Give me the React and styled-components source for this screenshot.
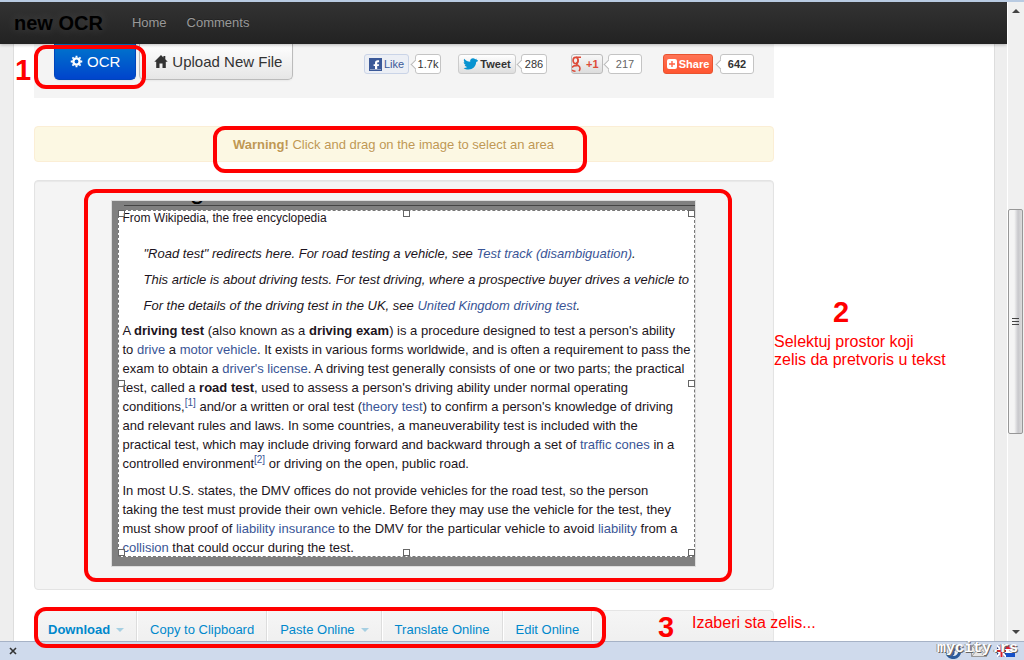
import React from "react"
import styled, { createGlobalStyle, css } from "styled-components"

const GlobalStyle = createGlobalStyle`
  * {
    box-sizing: border-box;
  }
  body {
    margin: 0;
    font-family: "Liberation Sans", Arial, sans-serif;
    font-size: 13px;
    line-height: 20px;
    color: #333;
    background: #eee;
  }
  a {
    text-decoration: none;
  }
  button {
    font-family: inherit;
    cursor: pointer;
  }
`

const Screen = styled.div`
  position: relative;
  display: flex;
  flex-direction: column;
  height: 100vh;
  overflow: hidden;
  border-top: 2px solid #b9cbe2;
`

const Browser = styled.div`
  display: flex;
  flex: 1;
  min-height: 0;
`

const Viewport = styled.div`
  display: flex;
  flex-direction: column;
  flex: 1;
  min-width: 0;
  overflow: hidden;
`

const Navbar = styled.nav`
  display: flex;
  align-items: center;
  flex: none;
  height: 42px;
  padding: 0 14px;
  gap: 20px;
  background: linear-gradient(#333, #222);
  box-shadow: 0 1px 3px rgba(0, 0, 0, 0.25);
  z-index: 1;
  a {
    color: #999;
    text-shadow: 0 -1px 0 rgba(0, 0, 0, 0.25);
  }
  .brand {
    margin-right: 9px;
    font-size: 20px;
    font-weight: bold;
    color: #000;
    text-shadow: 0 0 12px rgba(255, 255, 255, 0.15);
  }
`

const Paper = styled.main`
  flex: 1;
  min-height: 0;
  margin: 0 12px 0 13px;
  padding: 0 20px;
  overflow: hidden;
  background: #fff;
  border: solid #ddd;
  border-width: 0 1px;
`

const Column = styled.div`
  display: flex;
  flex-direction: column;
  max-width: 740px;
`

const Toolbar = styled.div`
  display: flex;
  align-items: flex-start;
  height: 54px;
  padding: 0 20px;
  background: #f4f4f4;
`

const LargeButton = styled.button`
  display: flex;
  align-items: center;
  gap: 4px;
  height: 36px;
  padding: 0 10px 0 14px;
  font-size: 15px;
  color: #333;
  background: linear-gradient(#fff, #e6e6e6);
  border: 1px solid #bbb;
  border-top: 0;
  border-radius: 0 0 5px 5px;
  box-shadow: 0 1px 2px rgba(0, 0, 0, 0.05);
  ${({ $primary }) =>
    $primary &&
    css`
      margin-right: 3px;
      padding: 0 15px;
      color: #fff;
      background: linear-gradient(#0077cc, #0044cc);
      border-color: #0044bb;
    `}
`

const Social = styled.div`
  display: flex;
  align-items: center;
  margin: 10px 0 0 auto;
`

const SocialItem = styled.div`
  display: flex;
  align-items: center;
  margin-left: ${({ $space }) => $space}px;
`

const socialLooks = {
  like: css`
    width: 45px;
    color: #3b5998;
    background: #eceff5;
    border-color: #cad4e7;
  `,
  tweet: css`
    width: 58px;
    font-weight: bold;
    color: #333;
    background: linear-gradient(#fff, #dedede);
    border-color: #ccc;
  `,
  plus: css`
    width: 32px;
    justify-content: flex-start;
    gap: 4px;
    font-weight: bold;
    color: #dd4b39;
    background: linear-gradient(#f8f8f8, #ddd);
    border-color: #bbb;
  `,
  share: css`
    width: 50px;
    font-weight: bold;
    color: #fff;
    background: linear-gradient(#ff7355, #ff5530);
    border-color: #e8532f;
  `,
}

const SocialButton = styled.button`
  display: flex;
  align-items: center;
  justify-content: center;
  gap: 2px;
  height: 20px;
  padding: 0;
  font-size: 11px;
  border: 1px solid;
  border-radius: 3px;
  ${({ $look }) => socialLooks[$look]}
`

const Count = styled.span`
  position: relative;
  width: ${({ $width }) => $width}px;
  height: 20px;
  margin-left: ${({ $gap }) => $gap}px;
  font-size: 11px;
  font-weight: ${({ $bold }) => ($bold ? "bold" : "normal")};
  line-height: 18px;
  text-align: center;
  color: ${({ $color }) => $color || "#333"};
  background: #fff;
  border: 1px solid #c4c4c4;
  border-radius: 3px;
  &::before {
    content: "";
    position: absolute;
    top: 6px;
    left: -4px;
    width: 6px;
    height: 6px;
    background: #fff;
    border: solid #bbb;
    border-width: 0 0 1px 1px;
    transform: rotate(45deg);
  }
`

const Alert = styled.p`
  margin: 28px 0 18px;
  padding: 9px 35px 7px 14px;
  text-align: center;
  line-height: 18px;
  color: #c09853;
  background: #fcf8e3;
  border: 1px solid #fbeed5;
  border-radius: 4px;
  text-shadow: 0 1px 0 rgba(255, 255, 255, 0.5);
`

const Well = styled.section`
  display: flex;
  justify-content: center;
  padding: 19px 21px 22px 19px;
  background: #f4f4f4;
  border: 1px solid #e3e3e3;
  border-radius: 4px;
  box-shadow: inset 0 1px 1px rgba(0, 0, 0, 0.05);
`

const Scan = styled.div`
  width: 585px;
  padding: 0 0 9px 6px;
  background: #808080;
  border: 1px solid #ddd;
`

const ScanTitle = styled.div`
  display: flex;
  align-items: flex-end;
  height: 5px;
  margin: 0 0 4px 6px;
  overflow: hidden;
  border-bottom: 1px solid #444;
  h1 {
    margin: 0;
    font-size: 26px;
    font-weight: normal;
    line-height: 30px;
    color: #000;
  }
`

const Selection = styled.article`
  position: relative;
  width: 577px;
  height: 347px;
  padding: 0 0 0 4px;
  font-size: 13px;
  line-height: 19px;
  white-space: nowrap;
  color: #1c1420;
  background: #fff;
  border: 1px dashed #777;
  p,
  blockquote {
    margin: 0;
  }
  .tagline {
    font-size: 12px;
    line-height: 15px;
  }
  blockquote {
    display: flex;
    flex-direction: column;
    gap: 7px;
    margin: 18px 0 6px 21px;
    font-style: italic;
  }
  p + p {
    margin-top: 8px;
  }
  a {
    color: #3a5596;
  }
  sup {
    font-size: 10px;
    line-height: 1px;
  }
`

const Handle = styled.i`
  position: absolute;
  top: ${({ $y }) => $y};
  left: ${({ $x }) => $x};
  width: 7px;
  height: 7px;
  border: 1px solid #666;
  background: rgba(255, 255, 255, 0.6);
`

const Menu = styled.div`
  display: flex;
  height: 40px;
  margin-top: 20px;
  background: linear-gradient(#f5f5f5, #eee);
  border: 1px solid #e5e5e5;
  border-radius: 4px 4px 0 0;
`

const MenuLink = styled.a`
  display: flex;
  align-items: center;
  gap: 6px;
  padding: 0 12px 0 13px;
  color: #0088cc;
  font-weight: ${({ $bold }) => ($bold ? "bold" : "normal")};
  border-right: 1px solid #ddd;
  box-shadow: 1px 0 0 #fff;
`

const Caret = styled.span`
  border: 4px solid transparent;
  border-top-color: #a6cfe2;
  border-bottom: 0;
`

const Scrollbar = styled.div`
  display: flex;
  flex-direction: column;
  align-items: center;
  justify-content: space-between;
  width: 17px;
  padding: 7px 1px 7px 0;
  background: #f0f0f0;
  border-left: 1px solid #fff;
`

const Arrow = styled.span`
  border: 4px solid transparent;
  ${({ $up }) =>
    $up
      ? "border-top: 0; border-bottom-color: #444;"
      : "border-bottom: 0; border-top-color: #444;"}
`

const Thumb = styled.div`
  display: flex;
  flex-direction: column;
  align-items: center;
  justify-content: center;
  gap: 2px;
  width: 15px;
  height: 36%;
  background: linear-gradient(90deg, #f5f5f5 40%, #c8c8cc 70%, #dcdcdc);
  border: 1px solid #979797;
  border-radius: 2px;
  span {
    width: 7px;
    height: 1px;
    background: #444;
  }
`

const StatusBar = styled.footer`
  display: flex;
  align-items: center;
  flex: none;
  height: 19px;
  padding: 0 9px 0 8px;
  background: #cfdaec;
  border-top: 1px solid #a6b2c6;
  button {
    display: flex;
    padding: 1px;
    background: none;
    border: 0;
  }
`

const Tray = styled.div`
  display: flex;
  align-items: center;
  gap: 10px;
  margin-left: auto;
`

const Watermark = styled.span`
  position: absolute;
  right: 6px;
  bottom: 2px;
  font-family: "Liberation Mono", monospace;
  font-size: 15px;
  font-weight: bold;
  line-height: 18px;
  color: #fff;
  text-shadow: 1px 1px 0 #666, -1px 0 0 #999;
`

const Outline = styled.div`
  position: absolute;
  top: ${({ $top }) => $top}px;
  left: ${({ $left }) => $left}px;
  width: ${({ $width }) => $width}px;
  height: ${({ $height }) => $height}px;
  border: 4px solid #f00;
  border-radius: 12px;
  pointer-events: none;
  z-index: 2;
`

const Note = styled.div`
  position: absolute;
  top: ${({ $top }) => $top}px;
  left: ${({ $left }) => $left}px;
  font-size: ${({ $step }) => ($step ? 29 : 16)}px;
  font-weight: ${({ $step }) => ($step ? "bold" : "normal")};
  line-height: ${({ $step }) => ($step ? 30 : 18)}px;
  white-space: pre;
  color: #f00;
  z-index: 2;
`

const GearIcon = () => (
  <svg width="13" height="13" viewBox="0 0 14 14">
    <circle cx="7" cy="7" r="3.4" fill="none" stroke="#fff" strokeWidth="2.6" />
    <path
      d="M7 0.8v2M7 11.2v2M0.8 7h2M11.2 7h2M2.6 2.6l1.4 1.4M10 10l1.4 1.4M2.6 11.4L4 10M10 4l1.4-1.4"
      stroke="#fff"
      strokeWidth="2"
    />
  </svg>
)

const HomeIcon = () => (
  <svg width="14" height="13" viewBox="0 0 14 13">
    <path
      d="M7 0L0.3 6.7h1.9V13h3.3V8.6h3V13h3.3V6.7h1.9L11.3 4.2V1H9.4v1.4z"
      fill="#333"
    />
  </svg>
)

const FacebookIcon = () => (
  <svg width="13" height="13" viewBox="0 0 13 13">
    <path d="M0 0h13v13H0z" fill="#3b5998" />
    <path
      d="M6 12V8H4.6V6.2H6V5c0-1.8 1-2.7 2.6-2.7h1.5v1.9H9c-.6 0-.8.3-.8.8v1.2h1.9L9.8 8H8.2v4z"
      fill="#fff"
    />
    <path d="M1 11h11v1H1z" fill="#8b9dc3" />
  </svg>
)

const TwitterIcon = () => (
  <svg width="15" height="12" viewBox="0 0 15 12">
    <path
      d="M14.8 3.2l-1.6.9C13 8.6 9.7 11.6 5.5 11.6 3.5 11.6 1.8 11 .6 10c1.5.1 2.7-.3 3.7-1C2.9 8.8 2 8 1.7 7h1.2C1.5 6.5.7 5.4.7 4.1l1.2.3C.8 3.4.5 2 1.2.7c1.6 1.8 3.5 2.9 6 3C6.8 1.7 8.2.3 10 .3c1 0 1.7.4 2.2 1L14 .7l-.7 1.4 1.4-.1z"
      fill="#0793d0"
    />
  </svg>
)

const GoogleIcon = () => (
  <svg width="10" height="16" viewBox="0 0 10 16">
    <ellipse
      cx="3.6"
      cy="4.5"
      rx="2.5"
      ry="3.2"
      fill="none"
      stroke="#dd4b39"
      strokeWidth="1.7"
    />
    <path
      d="M4 1.3h5M6 3.5c1 2-1.5 3.3-1.5 4.5 0 1.3 3.5 1.5 3.5 4.2 0 1.2-.4 2-1 2.8M0 11.5c1-1.7 3-2 5.5-1.8M0 14c1 .9 2 1.2 3.5 1.2"
      fill="none"
      stroke="#dd4b39"
      strokeWidth="1.6"
    />
  </svg>
)

const AddIcon = () => (
  <svg width="10" height="10" viewBox="0 0 10 10">
    <rect width="10" height="10" rx="2" fill="#fff" />
    <path d="M5 2v6M2 5h6" stroke="#ff6347" strokeWidth="1.4" />
  </svg>
)

const SwirlIcon = () => (
  <svg width="15" height="15" viewBox="0 0 15 15">
    <circle cx="7.5" cy="7.5" r="7" fill="#e8eef6" />
    <path
      d="M10.5 1.5A6.5 6.5 0 1 1 2 11c3 1 5.5-.5 5-3C6.6 6 8 5 9.5 6"
      fill="none"
      stroke="#2c5b9c"
      strokeWidth="3"
    />
  </svg>
)

const MailIcon = () => (
  <svg width="16" height="12" viewBox="0 0 16 12">
    <path d="M.5.5h15v11H.5z" fill="#e6e6e6" stroke="#999" />
    <path
      d="M.5.5L8 7l7.5-6.5M.5 11.5l5-6M15.5 11.5l-5-6"
      fill="none"
      stroke="#999"
    />
  </svg>
)

const FlagsIcon = () => (
  <svg width="18" height="12" viewBox="0 0 18 12">
    <path d="M0 0h9v12H0z" fill="#223a83" />
    <path d="M0 0l9 12M9 0L0 12" stroke="#fff" strokeWidth="2" />
    <path d="M4.5 0v12M0 6h9" stroke="#fff" strokeWidth="4" />
    <path d="M4.5 0v12M0 6h9" stroke="#d8202c" strokeWidth="2" />
    <path d="M9 0h9v4H9z" fill="#e02030" />
    <path d="M9 4h9v4H9z" fill="#fff" />
    <path d="M9 8h9v4H9z" fill="#1450c8" />
  </svg>
)

const handles = [
  ["-1px", "-1px"],
  ["284px", "-1px"],
  ["569px", "-1px"],
  ["-1px", "169px"],
  ["569px", "169px"],
  ["-1px", "338px"],
  ["284px", "338px"],
  ["569px", "338px"],
]

const outlines = [
  { left: 34, top: 43, width: 112, height: 44 },
  { left: 213, top: 124, width: 374, height: 47 },
  { left: 84, top: 187, width: 648, height: 393 },
  { left: 34, top: 605, width: 572, height: 41 },
]

const ScannedText = () => (
  <Selection>
    <p className="tagline">From Wikipedia, the free encyclopedia</p>
    <blockquote>
      <span>
        "Road test" redirects here. For road testing a vehicle, see{" "}
        <a href="#track">Test track (disambiguation)</a>.
      </span>
      <span>
        This article is about driving tests. For test driving, where a
        prospective buyer drives a vehicle to
      </span>
      <span>
        For the details of the driving test in the UK, see{" "}
        <a href="#uk">United Kingdom driving test</a>.
      </span>
    </blockquote>
    <p>
      A <b>driving test</b> (also known as a <b>driving exam</b>) is a procedure
      designed to test a person's ability
      <br />
      to <a href="#drive">drive</a> a <a href="#motor">motor vehicle</a>. It
      exists in various forms worldwide, and is often a requirement to pass the
      <br />
      exam to obtain a <a href="#license">driver's license</a>. A driving test
      generally consists of one or two parts; the practical
      <br />
      test, called a <b>road test</b>, used to assess a person's driving ability
      under normal operating
      <br />
      conditions,
      <sup>
        <a href="#ref1">[1]</a>
      </sup>{" "}
      and/or a written or oral test (<a href="#theory">theory test</a>) to
      confirm a person's knowledge of driving
      <br />
      and relevant rules and laws. In some countries, a maneuverability test is
      included with the
      <br />
      practical test, which may include driving forward and backward through a
      set of <a href="#cones">traffic cones</a> in a
      <br />
      controlled environment
      <sup>
        <a href="#ref2">[2]</a>
      </sup>{" "}
      or driving on the open, public road.
    </p>
    <p>
      In most U.S. states, the DMV offices do not provide vehicles for the road
      test, so the person
      <br />
      taking the test must provide their own vehicle. Before they may use the
      vehicle for the test, they
      <br />
      must show proof of <a href="#insurance">liability insurance</a> to the DMV
      for the particular vehicle to avoid <a href="#liability">liability</a>{" "}
      from a
      <br />
      <a href="#collision">collision</a> that could occur during the test.
    </p>
    {handles.map(([x, y]) => (
      <Handle key={x + y} $x={x} $y={y} />
    ))}
  </Selection>
)

const App = () => (
  <Screen>
    <GlobalStyle />
    <Browser>
      <Viewport>
        <Navbar>
          <a className="brand" href="#top">
            new OCR
          </a>
          <a href="#home">Home</a>
          <a href="#comments">Comments</a>
        </Navbar>
        <Paper>
          <Column>
            <Toolbar>
              <LargeButton $primary>
                <GearIcon />
                OCR
              </LargeButton>
              <LargeButton>
                <HomeIcon />
                Upload New File
              </LargeButton>
              <Social>
                <SocialItem $space={0}>
                  <SocialButton $look="like">
                    <FacebookIcon />
                    Like
                  </SocialButton>
                  <Count $width={26} $gap={6}>
                    1.7k
                  </Count>
                </SocialItem>
                <SocialItem $space={17}>
                  <SocialButton $look="tweet">
                    <TwitterIcon />
                    Tweet
                  </SocialButton>
                  <Count $width={26} $gap={5}>
                    286
                  </Count>
                </SocialItem>
                <SocialItem $space={24}>
                  <SocialButton $look="plus">
                    <GoogleIcon />
                    +1
                  </SocialButton>
                  <Count $width={34} $gap={5} $color="#666">
                    217
                  </Count>
                </SocialItem>
                <SocialItem $space={21}>
                  <SocialButton $look="share">
                    <AddIcon />
                    Share
                  </SocialButton>
                  <Count $width={34} $gap={7} $bold>
                    642
                  </Count>
                </SocialItem>
              </Social>
            </Toolbar>
            <Alert>
              <strong>Warning!</strong> Click and drag on the image to select an
              area
            </Alert>
            <Well>
              <Scan>
                <ScanTitle>
                  <h1>Driving test</h1>
                </ScanTitle>
                <ScannedText />
              </Scan>
            </Well>
            <Menu>
              <MenuLink href="#download" $bold>
                Download <Caret />
              </MenuLink>
              <MenuLink href="#copy">Copy to Clipboard</MenuLink>
              <MenuLink href="#paste">
                Paste Online <Caret />
              </MenuLink>
              <MenuLink href="#translate">Translate Online</MenuLink>
              <MenuLink href="#edit">Edit Online</MenuLink>
            </Menu>
          </Column>
        </Paper>
      </Viewport>
      <Scrollbar>
        <Arrow $up />
        <Thumb>
          <span />
          <span />
          <span />
        </Thumb>
        <Arrow />
      </Scrollbar>
    </Browser>
    <StatusBar>
      <button aria-label="Close">
        <svg width="8" height="8" viewBox="0 0 8 8">
          <path d="M1 1l6 6M7 1L1 7" stroke="#333" strokeWidth="1.6" />
        </svg>
      </button>
      <Tray>
        <SwirlIcon />
        <MailIcon />
        <FlagsIcon />
      </Tray>
      <Watermark>mycity.rs</Watermark>
    </StatusBar>
    {outlines.map(o => (
      <Outline
        key={o.top}
        $left={o.left}
        $top={o.top}
        $width={o.width}
        $height={o.height}
      />
    ))}
    <Note $step $left={15} $top={53}>
      1
    </Note>
    <Note $step $left={833} $top={295}>
      2
    </Note>
    <Note $left={774} $top={331}>
      {"Selektuj prostor koji\nzelis da pretvoris u tekst"}
    </Note>
    <Note $step $left={658} $top={610}>
      3
    </Note>
    <Note $left={692} $top={612}>
      Izaberi sta zelis...
    </Note>
  </Screen>
)

export default App
